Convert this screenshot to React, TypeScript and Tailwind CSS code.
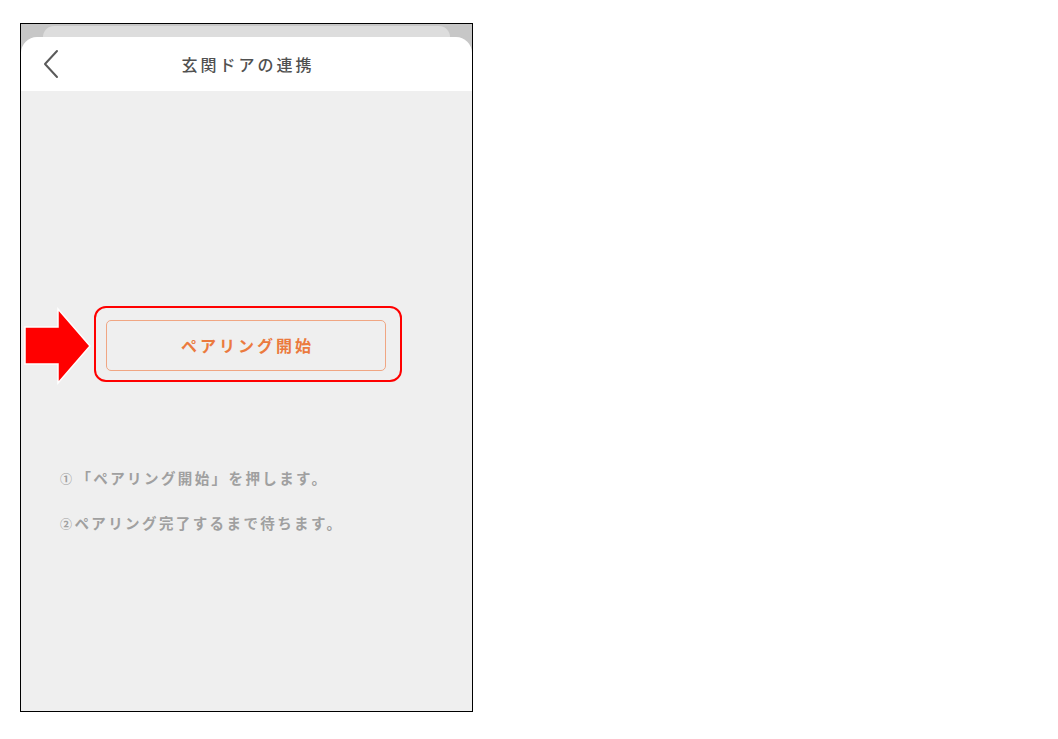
import React from "react";

export default function App() {
  const font = { fontFamily: '"Noto Sans CJK JP", "Noto Sans", sans-serif' };
  return (
    <div className="relative w-[1058px] h-[739px] bg-white" style={font}>
      <div className="absolute left-0 top-0 w-[1058px] h-[739px] pt-[23px] pl-[20px]">
        <div className="w-[453px] h-[689px] border-[1px] border-black flex flex-col bg-[#c7c7c7] overflow-hidden">
          {/* top strip with card behind */}
          <div className="h-[13px] px-[22px] pt-[2px]">
            <div className="h-[11px] rounded-t-[14px] bg-[#dddddd]" />
          </div>
          {/* header */}
          <div className="relative h-[54px] bg-white rounded-t-[16px] flex items-center justify-center">
            <svg className="absolute left-[21px] top-[12px]" width="18" height="30" viewBox="0 0 18 30">
              <polyline points="15,2 3,15 15,28" fill="none" stroke="#5a5a5a" strokeWidth="2" strokeLinecap="round" strokeLinejoin="round" />
            </svg>
            <span className="text-[16px] font-medium tracking-[3px] text-[#505050] leading-none pl-[3px]">玄関ドアの連携</span>
          </div>
          {/* body */}
          <div className="flex-1 bg-[#efefef] flex flex-col">
            <div className="mt-[215px] ml-[73px] w-[308px] h-[76px] border-2 border-[#ff0000] rounded-[12px] pl-[10px] pt-[12px]">
              <div className="w-[280px] h-[51px] border-[1.5px] border-[#f0a683] rounded-[5px] flex items-center justify-center pb-[2px]">
                <span className="text-[16px] font-bold tracking-[3px] text-[#eb7a3e] leading-none pl-[3px]">ペアリング開始</span>
              </div>
            </div>
            <div className="mt-[86px] ml-[39px] flex flex-col gap-[25px] text-[14.5px] font-bold text-[#a0a0a0] tracking-[2.4px] leading-[19px]">
              <span><span className="text-[12px] mr-[2px]">①</span>「ペアリング開始」を押します。</span>
              <span><span className="text-[12px]">②</span>ペアリング完了するまで待ちます。</span>
            </div>
          </div>
        </div>
      </div>
      {/* red arrow annotation */}
      <svg className="absolute left-[24px] top-[307px]" width="70" height="78" viewBox="0 0 70 78">
        <polygon points="1,20 34,20 34,2 66,39 34,76 34,57 1,57" fill="#ff0000" stroke="#ffffff" strokeWidth="1.5" strokeLinejoin="miter" />
      </svg>
    </div>
  );
}
